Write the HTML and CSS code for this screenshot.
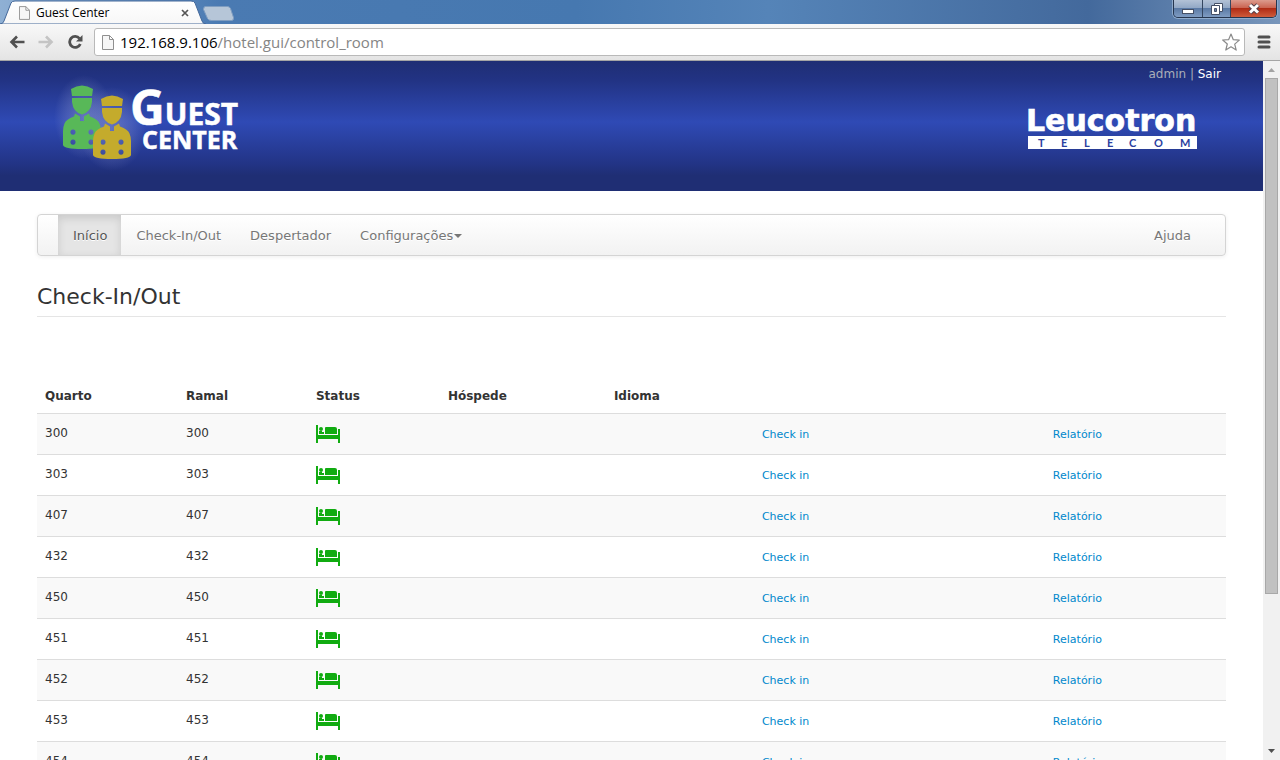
FILE: index.html
```html
<!DOCTYPE html>
<html lang="pt-BR">
<head>
<meta charset="utf-8">
<meta name="viewport" content="width=device-width, initial-scale=1">
<title>Guest Center</title>
<link rel="stylesheet" href="styles.css">
</head>
<body>
<svg class="defs" aria-hidden="true">
  <symbol id="page" viewBox="0 0 12 15"><path d="M.5.5h7l4 4v10H.5zM7.500.5v4h4" fill="#f6f6f6" stroke="#8f8f8f"/></symbol>
  <symbol id="bed" viewBox="0 0 24 18">
    <path d="M0 0h2v13h20V4h2v14h-2v-4H2v4H0z"/>
    <circle cx="5" cy="4" r="2"/>
    <path d="M3 6h3v1h2v2H3zM9 3q0-1 1-1h9q2 0 2 2v5H9zM2 10h20v4H2z"/>
  </symbol>
  <symbol id="bellhop" viewBox="0 0 38 64">
    <path d="M8 4q11-7 22 0l-1 7H9z"/>
    <path d="M9 13h20v4q-1 10-10 12.500Q10 27 9 17z"/>
    <path fill-rule="evenodd" d="M12 28.500l5 3V36h4v-4.500l5-3 1 3q8 3 9.500 7Q38 42 38 46v14q-1 4-19 4T0 60V46q0-4 1.500-7.500 1.500-4 9.500-7zM10 44.500a2.600 2.600 0 1 0 .01 0zM28 44.500a2.600 2.600 0 1 0 .01 0zM10 54.500a2.600 2.600 0 1 0 .01 0zM28 54.500a2.600 2.600 0 1 0 .01 0z"/>
  </symbol>
</svg>

<div class="titlebar">
  <div class="tab">
    <svg class="tab-shape" viewBox="0 0 206 24" aria-hidden="true">
      <defs><linearGradient id="tabfill" x2="0" y2="1"><stop stop-color="#fff"/><stop offset="1" stop-color="#f7f7f7"/></linearGradient></defs>
      <path d="M0 24q3 0 4-3L11 3q1-2 4-2h176q3 0 4 2l7 18q1 3 4 3z" fill="url(#tabfill)" stroke="#45699a"/>
    </svg>
    <svg class="tab-icon" aria-hidden="true"><use href="#page"/></svg>
    <span class="tab-title">Guest Center</span>
    <button class="tab-close" aria-label="Fechar guia"><svg viewBox="0 0 8 8"><path d="M1 1l6 6M7 1L1 7" stroke="#555" stroke-width="1.700"/></svg></button>
  </div>
  <button class="new-tab" aria-label="Nova guia"><svg viewBox="0 0 31 15"><path d="M2.500.5h22q2 0 3 2l3 9q.5 3-2 3h-20q-3 0-4-2l-4-9q0-3 2-3z" fill="#b6c6d8" stroke="#7f9dc0"/></svg></button>
  <div class="window-buttons">
    <button class="win min" aria-label="Minimizar"><svg viewBox="0 0 14 14"><rect x="1.500" y="7.500" width="11" height="4" fill="#fff" stroke="#455066"/></svg></button>
    <button class="win max" aria-label="Restaurar"><svg viewBox="0 0 14 14"><path d="M4.500 1.500h8v8h-8z" fill="#fff" stroke="#455066"/><path d="M1.500 3.500h8v9h-8z" fill="#fff" stroke="#455066"/><path d="M4.500 6.500h2v3h-2z" fill="#6b84a8" stroke="#455066"/></svg></button>
    <button class="win close" aria-label="Fechar"><svg viewBox="0 0 14 14"><path d="M3 3l8 7.500M11 3L3 10.500" stroke="#54414a" stroke-width="5"/><path d="M3 3l8 7.500M11 3L3 10.500" stroke="#fff" stroke-width="3"/></svg></button>
  </div>
</div>

<div class="toolbar">
  <button class="tool" aria-label="Voltar"><svg viewBox="0 0 16 14"><path d="M15.500 7H2.500M8 1.500L2.500 7 8 12.500" fill="none" stroke="#505050" stroke-width="2.600"/></svg></button>
  <button class="tool" aria-label="Avançar"><svg viewBox="0 0 16 14"><path d="M.5 7h13M8 1.500L13.500 7 8 12.500" fill="none" stroke="#c4c4c4" stroke-width="2.600"/></svg></button>
  <button class="tool" aria-label="Recarregar"><svg viewBox="0 0 16 14"><path d="M12.500 3.500A5.500 5.500 0 1 0 13.300 9" fill="none" stroke="#505050" stroke-width="2.800"/><path d="M15.500 0v6.500H9z" fill="#505050"/></svg></button>
  <div class="address" role="group" aria-label="Endereço">
    <svg class="page-icon" aria-hidden="true"><use href="#page"/></svg>
    <span class="url">192.168.9.106<span class="url-path">/hotel.gui/control_room</span></span>
    <button class="star" aria-label="Favorito"><svg viewBox="0 0 18 18"><path d="M9 1l2.300 5.700 6 .4-4.600 4 1.500 6L9 13.800 3.800 17l1.500-6-4.600-4 6-.4z" fill="#fff" stroke="#8a8a8a" stroke-width="1.200" stroke-linejoin="round"/></svg></button>
  </div>
  <button class="menu" aria-label="Menu"><svg viewBox="0 0 14 14"><path d="M2 2h10M2 7h10M2 12h10" stroke="#505050" stroke-width="3" stroke-linecap="round"/></svg></button>
</div>

<div class="viewport">
  <div class="page">
    <header class="banner">
      <svg class="logo" viewBox="0 0 200 95" role="img" aria-label="Guest Center">
        <defs><radialGradient id="glow"><stop stop-color="#8d96cc" stop-opacity=".55"/><stop offset=".6" stop-color="#8d96cc" stop-opacity=".25"/><stop offset="1" stop-color="#8d96cc" stop-opacity="0"/></radialGradient></defs>
        <ellipse cx="34" cy="42" rx="30" ry="42" fill="url(#glow)"/>
        <ellipse cx="62" cy="54" rx="34" ry="42" fill="url(#glow)"/>
        <use href="#bellhop" x="13" y="10" width="38" height="64" fill="#58b858"/>
        <use href="#bellhop" x="43" y="20" width="38" height="64" fill="#c4ab2c"/>
        <text class="logo-g" x="80" y="50">G<tspan class="logo-uest">UEST</tspan></text>
        <text class="logo-center" x="92" y="74">CENTER</text>
      </svg>
      <div class="banner-right">
        <p class="user">admin | <a href="#">Sair</a></p>
        <svg class="brand" viewBox="0 0 172 44" role="img" aria-label="Leucotron Telecom">
          <text class="brand-name" x="-1" y="25">Leucotron</text>
          <rect x="1" y="30" width="169" height="13" fill="#fff"/>
          <text class="brand-sub" x="11 34 57 80 102 127 153" y="41">TELECOM</text>
        </svg>
      </div>
    </header>
    <main class="content">
      <nav class="navbar">
        <a class="active" href="#">Início</a>
        <a href="#">Check-In/Out</a>
        <a href="#">Despertador</a>
        <a href="#">Configurações<span class="caret"></span></a>
        <a class="help" href="#">Ajuda</a>
      </nav>
      <h1>Check-In/Out</h1>
      <table class="rooms">
        <colgroup><col class="c-room"><col class="c-ext"><col class="c-status"><col class="c-guest"><col class="c-lang"><col class="c-check"><col></colgroup>
        <thead><tr><th>Quarto</th><th>Ramal</th><th>Status</th><th>Hóspede</th><th>Idioma</th><th></th><th></th></tr></thead>
        <tbody>
          <tr><td>300</td><td>300</td><td><svg class="bed"><use href="#bed"/></svg></td><td></td><td></td><td><a href="#">Check in</a></td><td><a href="#">Relatório</a></td></tr>
          <tr><td>303</td><td>303</td><td><svg class="bed"><use href="#bed"/></svg></td><td></td><td></td><td><a href="#">Check in</a></td><td><a href="#">Relatório</a></td></tr>
          <tr><td>407</td><td>407</td><td><svg class="bed"><use href="#bed"/></svg></td><td></td><td></td><td><a href="#">Check in</a></td><td><a href="#">Relatório</a></td></tr>
          <tr><td>432</td><td>432</td><td><svg class="bed"><use href="#bed"/></svg></td><td></td><td></td><td><a href="#">Check in</a></td><td><a href="#">Relatório</a></td></tr>
          <tr><td>450</td><td>450</td><td><svg class="bed"><use href="#bed"/></svg></td><td></td><td></td><td><a href="#">Check in</a></td><td><a href="#">Relatório</a></td></tr>
          <tr><td>451</td><td>451</td><td><svg class="bed"><use href="#bed"/></svg></td><td></td><td></td><td><a href="#">Check in</a></td><td><a href="#">Relatório</a></td></tr>
          <tr><td>452</td><td>452</td><td><svg class="bed"><use href="#bed"/></svg></td><td></td><td></td><td><a href="#">Check in</a></td><td><a href="#">Relatório</a></td></tr>
          <tr><td>453</td><td>453</td><td><svg class="bed"><use href="#bed"/></svg></td><td></td><td></td><td><a href="#">Check in</a></td><td><a href="#">Relatório</a></td></tr>
          <tr><td>454</td><td>454</td><td><svg class="bed"><use href="#bed"/></svg></td><td></td><td></td><td><a href="#">Check in</a></td><td><a href="#">Relatório</a></td></tr>
        </tbody>
      </table>
    </main>
  </div>
  <div class="scrollbar" aria-hidden="true">
    <svg class="arrow" viewBox="0 0 17 17"><path d="M5 11h7L8.500 7z" fill="#a3a3a3"/></svg>
    <div class="track"><div class="thumb"></div></div>
    <svg class="arrow" viewBox="0 0 17 17"><path d="M5 6h7l-3.500 4z" fill="#505050"/></svg>
  </div>
</div>
</body>
</html>
```

FILE: styles.css
```css
* { box-sizing: border-box; }
body {
  margin: 0;
  height: 100vh;
  display: flex;
  flex-direction: column;
  overflow: hidden;
  background: #fff;
  color: #333;
  font: 13px/20px "DejaVu Sans", Verdana, sans-serif;
}
button { border: 0; padding: 0; background: none; }
button svg { display: block; }
a { color: #0088cc; text-decoration: none; }
.defs { position: absolute; width: 0; height: 0; }

/* Window frame */
.titlebar {
  flex: none;
  display: flex;
  height: 24px;
  background: linear-gradient(90deg, #8fb0d4 0, #4a7ab2 220px, #4678b0 45%, #5584b8 60%, #43699c 85%, #7896bb 100%);
}
.tab {
  position: relative;
  display: flex;
  align-items: center;
  width: 206px;
  padding: 2px 17px 0 19px;
}
.tab-shape { position: absolute; left: 0; top: 0; width: 206px; height: 24px; }
.tab-icon { position: relative; width: 11px; height: 14px; }
.tab-title {
  position: relative;
  flex: 1;
  padding-left: 6px;
  color: #000;
  font: 12px/20px "Open Sans", "Noto Sans", sans-serif;
}
.tab-close { position: relative; width: 8px; height: 8px; }
.new-tab { width: 31px; height: 15px; margin: 6px 0 0 -3px; }
.window-buttons {
  display: flex;
  height: 18px;
  margin: 0 3px 0 auto;
  border: 1px solid #26364f;
  border-top: 0;
  border-radius: 0 0 5px 5px;
  overflow: hidden;
  box-shadow: 0 0 0 1px #8fabcc;
}
.win {
  display: flex;
  align-items: center;
  justify-content: center;
  width: 28px;
  background: linear-gradient(#b3c2d6 0, #93a9c6 45%, #5b7aa5 50%, #7f9cc2 100%);
}
.win + .win { border-left: 1px solid #34465f; }
.win svg { width: 14px; height: 14px; }
.win.close { width: 46px; background: linear-gradient(#dc9b8d 0, #cb6552 45%, #b02c15 50%, #cf5b3b 100%); }

.toolbar {
  flex: none;
  display: flex;
  align-items: center;
  height: 37px;
  padding: 0 9px;
  background: linear-gradient(#f8f8f8, #e4e4e4);
  border-bottom: 1px solid #a5a5a5;
}
.tool { width: 16px; height: 14px; margin-right: 13px; }
.tool:nth-child(3) { margin-right: 11px; }
.address {
  flex: 1;
  display: flex;
  align-items: center;
  height: 28px;
  padding: 0 4px 0 7px;
  border: 1px solid #b9b9b9;
  border-radius: 3px;
  background: #fff;
}
.page-icon { width: 12px; height: 15px; }
.url { flex: 1; padding-left: 6px; color: #000; font: 15px/20px "Open Sans", "Noto Sans", sans-serif; }
.url-path { color: #858585; }
.star { width: 18px; height: 18px; }
.menu { width: 14px; height: 14px; margin-left: 12px; }

/* Scrolling area */
.viewport { flex: 1; min-height: 0; display: flex; }
.page { flex: 1; min-width: 0; overflow: hidden; }
.scrollbar { flex: none; display: flex; flex-direction: column; width: 17px; background: #f1f1f1; }
.arrow { flex: none; width: 17px; height: 17px; }
.track { flex: 1; padding: 0 2px; }
.thumb { height: 77.6%; background: #c1c1c1; border: 1px solid #a8a8a8; }

/* Banner */
.banner {
  display: flex;
  justify-content: space-between;
  height: 130px;
  padding: 0 42px 0 50px;
  background: linear-gradient(#1f2e74 0, #223384 15%, #2f4ab5 47%, #223384 80%, #1f2e74 88%);
}
.logo { width: 200px; height: 95px; margin-top: 14px; overflow: visible; }
.logo text { fill: #fff; stroke: #fff; stroke-width: .5; font-family: "Open Sans", sans-serif; font-weight: 700; }
.logo .logo-g { font-size: 48px; }
.logo .logo-uest { font-size: 30px; }
.logo .logo-center { font-size: 25px; }
.banner-right { display: flex; flex-direction: column; align-items: flex-end; padding-top: 3px; }
.user { margin: 0; color: #a9aeb9; font-size: 12px; }
.user a { color: #fff; }
.brand { width: 172px; height: 44px; margin: 22px 22px 0 0; overflow: visible; }
.brand-name { fill: #fff; stroke: #fff; stroke-width: .6; font: 700 30px "DejaVu Sans", sans-serif; }
.brand-sub { fill: #2b419f; font: 700 11px Lato, sans-serif; }

/* Page content */
.content { padding: 23px 37px 0; }
.navbar {
  display: flex;
  height: 42px;
  padding: 0 20px;
  border: 1px solid #d4d4d4;
  border-radius: 4px;
  background: linear-gradient(#fff, #f2f2f2);
  box-shadow: 0 1px 4px rgba(0, 0, 0, .065);
}
.navbar a { padding: 11px 14px 9px 15px; color: #777; font-size: 13px; text-shadow: 0 1px 0 #fff; }
.navbar .active { color: #555; background: #e5e5e5; box-shadow: inset 0 3px 8px rgba(0, 0, 0, .125); }
.navbar .help { margin-left: auto; }
.caret {
  display: inline-block;
  margin-left: 1px;
  margin-bottom: 2px;
  vertical-align: middle;
  border: 4px solid transparent;
  border-top-color: #777;
  border-bottom: 0;
}
h1 { margin: 20px 0 60px; padding-top: 2px; border-bottom: 1px solid #e5e5e5; font-size: 22px; line-height: 38px; font-weight: 400; }
.rooms { width: 100%; table-layout: fixed; border-collapse: collapse; }
.c-room { width: 11.86%; }
.c-ext { width: 10.93%; }
.c-status { width: 11.1%; }
.c-guest { width: 13.96%; }
.c-lang { width: 12.45%; }
.c-check { width: 24.47%; }
.rooms th { height: 36px; padding: 9px 8px 7px; text-align: left; font-size: 12px; }
.rooms td { height: 41px; padding: 9px 8px 7px; border-top: 1px solid #ddd; vertical-align: top; font-size: 12px; }
.rooms td a { display: block; padding-top: 2px; font-size: 11px; }
.rooms tbody tr:nth-child(odd) { background: #f9f9f9; }
.bed { display: block; width: 24px; height: 18px; margin-top: 2px; fill: #11ab11; }
```
